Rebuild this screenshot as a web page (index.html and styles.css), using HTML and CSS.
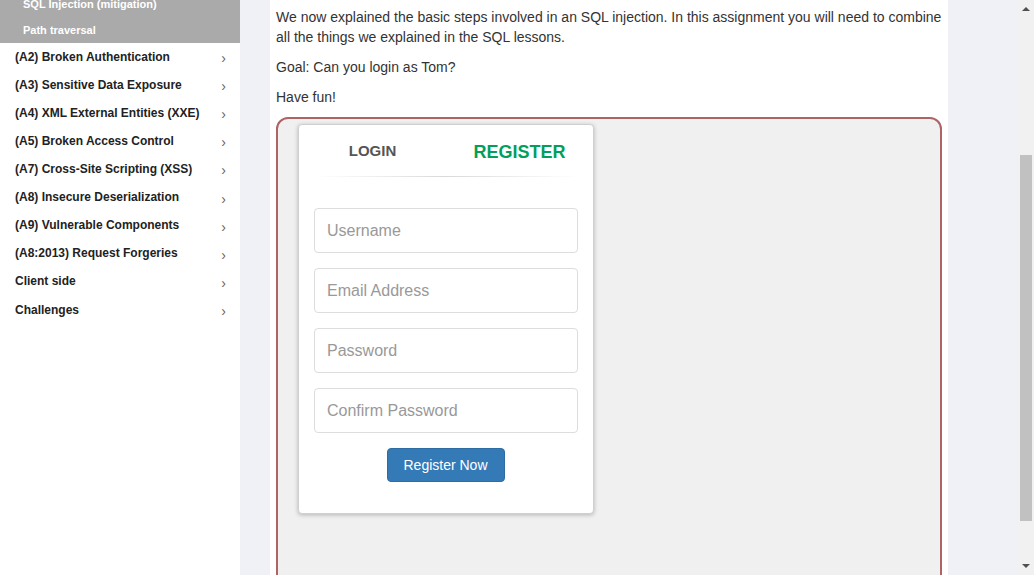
FILE: index.html
```html
<!DOCTYPE html>
<html>
<head>
<meta charset="utf-8">
<link rel="stylesheet" href="styles.css">
</head>
<body>
<div class="app">
  <nav class="sidebar">
    <div class="submenu">
      <div class="sub-item">SQL Injection (mitigation)</div>
      <div class="sub-item">Path traversal</div>
    </div>
    <ul class="menu">
      <li><span>(A2) Broken Authentication</span><i>›</i></li>
      <li><span>(A3) Sensitive Data Exposure</span><i>›</i></li>
      <li><span>(A4) XML External Entities (XXE)</span><i>›</i></li>
      <li><span>(A5) Broken Access Control</span><i>›</i></li>
      <li><span>(A7) Cross-Site Scripting (XSS)</span><i>›</i></li>
      <li><span>(A8) Insecure Deserialization</span><i>›</i></li>
      <li><span>(A9) Vulnerable Components</span><i>›</i></li>
      <li><span>(A8:2013) Request Forgeries</span><i>›</i></li>
      <li><span>Client side</span><i>›</i></li>
      <li><span>Challenges</span><i>›</i></li>
    </ul>
  </nav>
  <main class="main">
    <div class="panel">
      <p>We now explained the basic steps involved in an SQL injection. In this assignment you will need to combine all the things we explained in the SQL lessons.</p>
      <p>Goal: Can you login as Tom?</p>
      <p>Have fun!</p>
      <div class="attack">
        <div class="card">
          <div class="card-head">
            <div class="tabs">
              <div class="tab tab-login">LOGIN</div>
              <div class="tab tab-register">REGISTER</div>
            </div>
            <hr class="divider">
          </div>
          <form class="form">
            <input class="field" type="text" placeholder="Username">
            <input class="field" type="text" placeholder="Email Address">
            <input class="field" type="password" placeholder="Password">
            <input class="field" type="password" placeholder="Confirm Password">
            <div class="actions"><button class="btn" type="button">Register Now</button></div>
          </form>
        </div>
      </div>
    </div>
  </main>
  <div class="scrollbar">
    <div class="arrow arrow-up"></div>
    <div class="track"><div class="thumb"></div></div>
    <div class="arrow arrow-down"></div>
  </div>
</div>
</body>
</html>
```

FILE: styles.css
```css
* { box-sizing: border-box; }
html, body { margin: 0; padding: 0; height: 100%; overflow: hidden; }
body {
  font-family: "Liberation Sans", Arial, sans-serif;
  background: #eff1f6;
  color: #333;
}
.app { display: flex; height: 575px; }

.sidebar {
  width: 240px;
  flex: none;
  background: #fff;
  overflow: hidden;
}
.submenu {
  background: #aaaaaa;
  margin-top: -9px;
}
.sub-item {
  height: 26px;
  line-height: 26px;
  padding-left: 23px;
  color: #fff;
  font-size: 11px;
  font-weight: bold;
}
.menu { list-style: none; margin: 0; padding: 0; }
.menu li {
  height: 28.12px;
  display: flex;
  align-items: center;
  justify-content: space-between;
  padding: 0 14px 1px 15px;
  font-size: 12px;
  font-weight: bold;
  color: #222;
}
.menu li i {
  font-style: normal;
  font-weight: normal;
  font-size: 14px;
  color: #666;
  margin-top: 3px;
}

.main {
  flex: 1;
  padding: 0 70px 0 30px;
}
.panel {
  width: 678px;
  height: 100%;
  background: #fff;
  padding: 7px 6px 0;
  font-size: 14px;
  line-height: 20px;
}
.panel p { margin: 0 0 10px; }

.attack {
  border: 2px solid #ad6466;
  border-radius: 12px;
  background: #f0f0f0;
  padding: 5px 20px 0;
  min-height: 480px;
}
.card {
  width: 296px;
  height: 390px;
  background: #fff;
  border: 1px solid #d0d0d0;
  border-radius: 4px;
  box-shadow: 0 1px 4px rgba(0,0,0,0.25);
}
.card-head { padding: 15px 15px 0; }
.tabs { display: flex; margin: 0 -15px; }
.tab {
  flex: 1;
  text-align: center;
  font-weight: bold;
  line-height: 22px;
  height: 22px;
}
.tab-login { font-size: 15px; color: #555; }
.tab-register { font-size: 18px; color: #029f5b; margin-top: 1px; }
.divider {
  margin: 13px 0 0;
  border: 0;
  height: 1px;
  background-image: linear-gradient(to right, rgba(0,0,0,0), rgba(0,0,0,0.15), rgba(0,0,0,0));
}
.form {
  padding: 31px 15px 0;
  display: flex;
  flex-direction: column;
  gap: 15px;
  margin: 0;
}
.field {
  display: block;
  width: 264px;
  height: 45px;
  border: 1px solid #ddd;
  border-radius: 4px;
  padding: 0 12px;
  font-family: "Liberation Sans", Arial, sans-serif;
  font-size: 16px;
  color: #555;
  background: #fff;
  outline: none;
}
.field::placeholder { color: #999; }
.actions { display: flex; justify-content: center; }
.btn {
  height: 34px;
  padding: 0 16px 0 15px;
  border: 1px solid #2e6da4;
  border-radius: 4px;
  background: #337ab7;
  color: #fff;
  font-family: "Liberation Sans", Arial, sans-serif;
  font-size: 14px;
}

.scrollbar {
  width: 16px;
  flex: none;
  background: #f1f1f1;
  display: flex;
  flex-direction: column;
}
.arrow { height: 17px; flex: none; position: relative; }
.arrow::after {
  content: "";
  position: absolute;
  left: 4px;
  width: 0; height: 0;
  border-left: 4px solid transparent;
  border-right: 4px solid transparent;
}
.arrow-up::after { top: 7px; border-bottom: 4px solid #505050; }
.arrow-down::after { top: 6px; border-top: 4px solid #505050; }
.track { flex: 1; padding: 138px 2px 0; }
.thumb { height: 366px; background: #c1c1c1; }
```
